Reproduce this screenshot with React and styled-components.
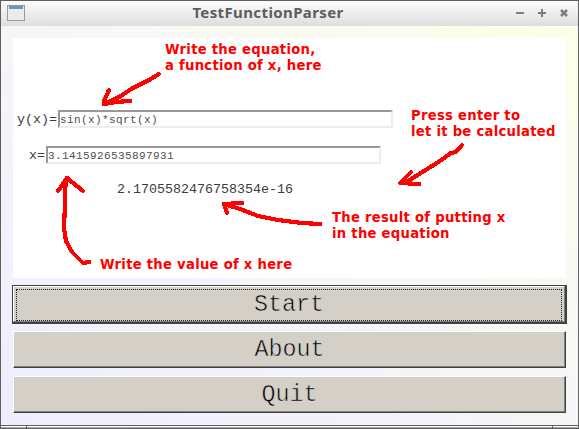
import React from "react";
import styled, { createGlobalStyle, css } from "styled-components";

const Global = createGlobalStyle`
  * { box-sizing: border-box; }
  body { margin: 0; overflow: hidden; }
`;

const Window = styled.div`
  position: relative;
  width: 579px;
  height: 429px;
  display: flex;
  flex-direction: column;
  border: 1px solid #5f5f5f;
  background: #5f5f5f;
`;

const TitleBar = styled.header`
  height: 25px;
  display: grid;
  grid-template-columns: 75px 1fr 75px;
  grid-template-rows: 25px;
  align-items: start;
  background: linear-gradient(#fcfcfc, #dedede);
`;

const TitleIcon = styled.svg`
  width: 18px;
  height: 16px;
  margin: 4px 0 0 6px;
`;

const Title = styled.h1`
  margin: 0;
  text-align: center;
  font: 700 15px/22px "Noto Sans", sans-serif;
  letter-spacing: 0.38px;
  padding-right: 43px;
  color: #5d5d5d;
  white-space: nowrap;
`;

const Controls = styled.svg`
  width: 75px;
  height: 25px;
`;

const Body = styled.main`
  height: 399px;
  padding: 12px 11px 0;
  display: flex;
  flex-direction: column;
  background: linear-gradient(to top right, #eeedff 0%, #f6f6f8 50%, #feffe9 100%);
`;

const Panel = styled.section`
  height: 240px;
  margin: 0 1px 7px;
  padding: 72px 0 0 4px;
  background: #fff;
  color: #3c3c3c;
  font: 13.33px/18px "Liberation Mono", monospace;
`;

const Field = styled.label`
  display: flex;
  height: 18px;
  margin: 0 0 18px ${(p) => p.$indent || 0}px;
`;

const FieldName = styled.span`
  width: ${(p) => p.$width}px;
  flex: none;
  white-space: nowrap;
  line-height: 19px;
`;

const Input = styled.input`
  width: 335px;
  height: 18px;
  padding: 1px 0 0;
  border: 2px solid;
  border-color: #999 #ededed #ededed #999;
  border-radius: 0;
  outline: 0;
  background: #fff;
  color: #505050;
  font: 11px/13px "Liberation Mono", monospace;
  letter-spacing: 0.399px;
`;

const Result = styled.output`
  display: block;
  margin-left: 100px;
  line-height: 18px;
  margin-top: -1px;
`;

const Buttons = styled.nav`
  display: flex;
  flex-direction: column;
`;

const raised = css`
  border: 1px solid;
  border-color: #fff #404040 #404040 #fff;
  box-shadow: inset -1px -1px #808080;
`;

const Button = styled.button`
  ${raised}
  height: 37px;
  margin: 0 1px 8px;
  padding: 2px 0 0;
  border-radius: 0;
  background: #d4d0c8;
  color: #000;
  font: 23.33px/33px "Liberation Mono", monospace;
  -webkit-text-stroke: 0.6px #d4d0c8;
`;

const DefaultFrame = styled.div`
  height: 39px;
  margin-bottom: 7px;
  border: solid #404040;
  border-width: 1px 2px 2px 1px;
  display: grid;

  ${Button} {
    height: 36px;
    margin: 0;
    padding: 3px;
    display: grid;
    border-color: #fff #808080 #808080 #fff;
    box-shadow: none;
  }
`;

const Focus = styled.span`
  margin: -1px;
  border: 1px dotted #202020;
  line-height: 31px;
  height: 32px;
`;

const BottomEdge = styled.footer`
  display: grid;
  grid-template-columns: 25px 1fr 25px;
  gap: 1px;
  height: 3px;
  border-top: 1px solid #5f5f5f;
`;

const EdgePart = styled.span`
  background: linear-gradient(#fff 50%, #aaa 50%);
`;

const Marks = styled.svg`
  position: absolute;
  left: -1px;
  top: -1px;
  pointer-events: none;
  fill: none;
  stroke: #f00;
  stroke-width: 4.2;
  stroke-linecap: round;
  stroke-linejoin: round;
  shape-rendering: crispEdges;
`;

const Note = styled.p`
  position: absolute;
  left: ${(p) => p.$x - 1}px;
  top: ${(p) => p.$y}px;
  margin: 0;
  color: #f00;
  font: 700 13.2px/16px "DejaVu Sans", sans-serif;
  letter-spacing: 0.27px;
  white-space: pre;
`;

const arrows = [
  "M159 74L149 80L133 88L119 97L105 104M109 90L104 101L104 104L116 102L130 101",
  "M462 145L456 152L451 153L440 161L424 171L408 181L401 183M411 172L400 183L419 184",
  "M320 224L302 223L278 220L258 216L240 209L224 204M242 203L224 204L227 213",
  "M89 262L83 263L72 252L66 241L64 228L65 204L65 189L67 178M58 191L67 178L83 191",
];

const notes = [
  [165, 41, "Write the equation,\na function of x, here"],
  [411, 107, "Press enter to\nlet it be calculated"],
  [332, 209, "The result of putting x\nin the equation"],
  [100, 256, "Write the value of x here"],
];

export default function App() {
  return (
    <>
      <Global />
      <Window>
        <TitleBar>
          <TitleIcon viewBox="0 0 18 16">
            <rect x="0.5" y="0.5" width="17" height="15" fill="#ececec" stroke="#999" />
            <path d="M2 1h14v3H2z" fill="#7291bf" />
          </TitleIcon>
          <Title>TestFunctionParser</Title>
          <Controls viewBox="503 1 75 25">
            <path d="M516 12h8v2h-8zM538 12h8v2h-8zM541 9h2v8h-2z" fill="#7d7d7d" />
            <path d="M561 10l6 6M567 10l-6 6" stroke="#7d7d7d" strokeWidth="2.6" />
          </Controls>
        </TitleBar>
        <Body>
          <Panel>
            <Field>
              <FieldName $width={41}>y(x)=</FieldName>
              <Input defaultValue="sin(x)*sqrt(x)" />
            </Field>
            <Field $indent={12}>
              <FieldName $width={17}>x=</FieldName>
              <Input defaultValue="3.1415926535897931" />
            </Field>
            <Result>2.1705582476758354e-16</Result>
          </Panel>
          <Buttons>
            <DefaultFrame>
              <Button><Focus>Start</Focus></Button>
            </DefaultFrame>
            <Button>About</Button>
            <Button>Quit</Button>
          </Buttons>
        </Body>
        <BottomEdge><EdgePart /><EdgePart /><EdgePart /></BottomEdge>
        <Marks width="579" height="429">
          {arrows.map((d) => <path key={d} d={d} />)}
        </Marks>
        {notes.map(([x, y, text]) => <Note key={text} $x={x} $y={y}>{text}</Note>)}
      </Window>
    </>
  );
}
